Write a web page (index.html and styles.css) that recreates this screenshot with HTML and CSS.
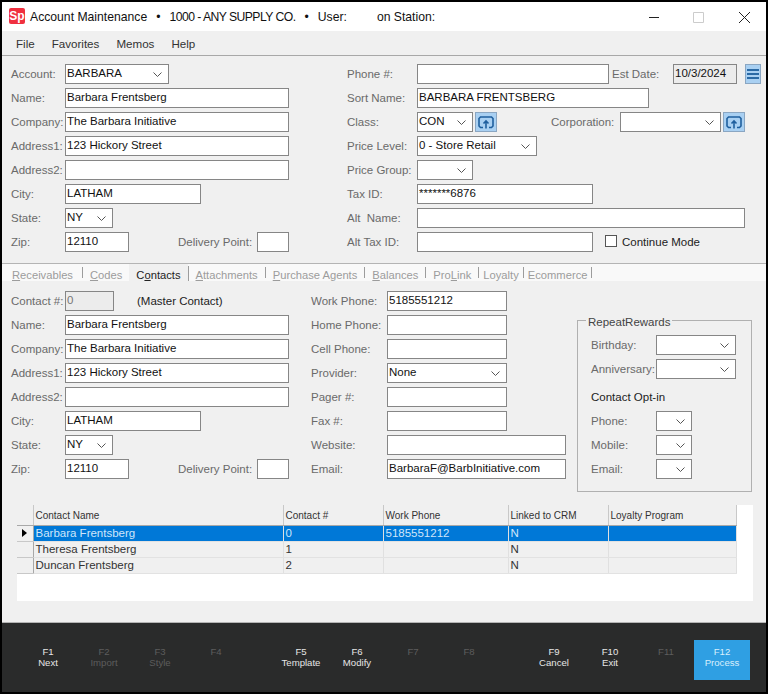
FILE: index.html
```html
<!DOCTYPE html>
<html lang="en">
<head>
  <meta charset="UTF-8">
  <title>Account Maintenance</title>
  <link rel="stylesheet" href="styles.css">
</head>
<body>
  <div class="window">
    <div class="titlebar">
      <div class="logo">Sp</div>
      <div class="title">
        <span>Account Maintenance</span>
        <span>•</span>
        <span class="company">1000 - ANY SUPPLY CO.</span>
        <span>•</span>
        <span>User:</span>
        <span class="station">on Station:</span>
      </div>
      <svg class="win-btn" width="101" height="12" viewBox="0 0 101 12" fill="none">
        <path d="M0 6.5H10" stroke="#222"/>
        <path d="M44.5 1.5H54.5V11.5H44.5Z" stroke="#ccc"/>
        <path d="M90 1L101 12M101 1L90 12" stroke="#222"/>
      </svg>
    </div>

    <div class="menubar">
      <span>File</span>
      <span>Favorites</span>
      <span>Memos</span>
      <span>Help</span>
    </div>

    <div class="account">
      <div class="col-left">
        <div class="row"><label>Account:</label><div class="field select w104">BARBARA<svg class="chev" width="9" height="5" viewBox="0 0 9 5"><path d="M.5 .5L4.5 4.5L8.5 .5" fill="none" stroke="#555"/></svg></div></div>
        <div class="row"><label>Name:</label><div class="field w224">Barbara Frentsberg</div></div>
        <div class="row"><label>Company:</label><div class="field w224">The Barbara Initiative</div></div>
        <div class="row"><label>Address1:</label><div class="field w224">123 Hickory Street</div></div>
        <div class="row"><label>Address2:</label><div class="field w224"></div></div>
        <div class="row"><label>City:</label><div class="field w136">LATHAM</div></div>
        <div class="row"><label>State:</label><div class="field select w48">NY<svg class="chev" width="9" height="5" viewBox="0 0 9 5"><path d="M.5 .5L4.5 4.5L8.5 .5" fill="none" stroke="#555"/></svg></div></div>
        <div class="row"><label>Zip:</label><div class="field w64">12110</div><label class="delivery">Delivery Point:</label><div class="field w32"></div></div>
      </div>
      <div class="col-right">
        <div class="row"><label>Phone #:</label><div class="field w192"></div><label class="est">Est Date:</label><div class="field disabled w64">10/3/2024</div>
          <div class="tool-btn menu-btn"><svg width="12" height="12" viewBox="0 0 12 12"><path d="M0 2H12M0 6H12M0 10H12" stroke="#2a6aa6" stroke-width="2"/></svg></div></div>
        <div class="row"><label>Sort Name:</label><div class="field w232">BARBARA FRENTSBERG</div></div>
        <div class="row"><label>Class:</label><div class="field select w56">CON<svg class="chev" width="9" height="5" viewBox="0 0 9 5"><path d="M.5 .5L4.5 4.5L8.5 .5" fill="none" stroke="#555"/></svg></div>
          <div class="tool-btn"><svg width="16" height="13" viewBox="0 0 16 13" fill="none"><path d="M5 11.5H2.5L1 10V2.5L2.5 1H13.5L15 2.5V10L13.5 11.5H11M8 12.5V5M5.5 7.5L8 5L10.5 7.5" stroke="#1f5f9e" stroke-width="1.6"/></svg></div>
          <label class="corp">Corporation:</label><div class="field select w101"><svg class="chev" width="9" height="5" viewBox="0 0 9 5"><path d="M.5 .5L4.5 4.5L8.5 .5" fill="none" stroke="#555"/></svg></div>
          <div class="tool-btn"><svg width="16" height="13" viewBox="0 0 16 13" fill="none"><path d="M5 11.5H2.5L1 10V2.5L2.5 1H13.5L15 2.5V10L13.5 11.5H11M8 12.5V5M5.5 7.5L8 5L10.5 7.5" stroke="#1f5f9e" stroke-width="1.6"/></svg></div></div>
        <div class="row"><label>Price Level:</label><div class="field select w120">0 - Store Retail<svg class="chev" width="9" height="5" viewBox="0 0 9 5"><path d="M.5 .5L4.5 4.5L8.5 .5" fill="none" stroke="#555"/></svg></div></div>
        <div class="row"><label>Price Group:</label><div class="field select w56"><svg class="chev" width="9" height="5" viewBox="0 0 9 5"><path d="M.5 .5L4.5 4.5L8.5 .5" fill="none" stroke="#555"/></svg></div></div>
        <div class="row"><label>Tax ID:</label><div class="field w176">*******6876</div></div>
        <div class="row"><label>Alt &nbsp;Name:</label><div class="field w328"></div></div>
        <div class="row"><label>Alt Tax ID:</label><div class="field w176"></div><div class="checkbox"></div><span class="check-label">Continue Mode</span></div>
      </div>
    </div>

    <div class="tabs">
      <div class="tab t-first"><u>R</u>eceivables</div><i class="tab-sep"></i>
      <div class="tab"><u>C</u>odes</div>
      <div class="tab active">C<u>o</u>ntacts</div><i class="tab-sep tall"></i>
      <div class="tab"><u>A</u>ttachments</div><i class="tab-sep"></i>
      <div class="tab"><u>P</u>urchase Agents</div><i class="tab-sep"></i>
      <div class="tab"><u>B</u>alances</div><i class="tab-sep"></i>
      <div class="tab">Pro<u>L</u>ink</div><i class="tab-sep"></i>
      <div class="tab t-tight">Loyalty</div><i class="tab-sep"></i>
      <div class="tab t-tight">Ecommerce</div><i class="tab-sep"></i>
    </div>

    <div class="contact">
      <div class="col-contact">
        <div class="row"><label>Contact #:</label><div class="field disabled id-field w49">0</div><span class="master">(Master Contact)</span></div>
        <div class="row"><label>Name:</label><div class="field w224">Barbara Frentsberg</div></div>
        <div class="row"><label>Company:</label><div class="field w224">The Barbara Initiative</div></div>
        <div class="row"><label>Address1:</label><div class="field w224">123 Hickory Street</div></div>
        <div class="row"><label>Address2:</label><div class="field w224"></div></div>
        <div class="row"><label>City:</label><div class="field w136">LATHAM</div></div>
        <div class="row"><label>State:</label><div class="field select w48">NY<svg class="chev" width="9" height="5" viewBox="0 0 9 5"><path d="M.5 .5L4.5 4.5L8.5 .5" fill="none" stroke="#555"/></svg></div></div>
        <div class="row"><label>Zip:</label><div class="field w64">12110</div><label class="delivery">Delivery Point:</label><div class="field w32"></div></div>
      </div>
      <div class="col-phones">
        <div class="row"><label>Work Phone:</label><div class="field w120">5185551212</div></div>
        <div class="row"><label>Home Phone:</label><div class="field w120"></div></div>
        <div class="row"><label>Cell Phone:</label><div class="field w120"></div></div>
        <div class="row"><label>Provider:</label><div class="field select w120">None<svg class="chev" width="9" height="5" viewBox="0 0 9 5"><path d="M.5 .5L4.5 4.5L8.5 .5" fill="none" stroke="#555"/></svg></div></div>
        <div class="row"><label>Pager #:</label><div class="field w120"></div></div>
        <div class="row"><label>Fax #:</label><div class="field w120"></div></div>
        <div class="row"><label>Website:</label><div class="field w179"></div></div>
        <div class="row"><label>Email:</label><div class="field w179">BarbaraF@BarbInitiative.com</div></div>
      </div>
      <fieldset class="rewards">
        <legend>RepeatRewards</legend>
        <div class="row"><label>Birthday:</label><div class="field select w80"><svg class="chev" width="9" height="5" viewBox="0 0 9 5"><path d="M.5 .5L4.5 4.5L8.5 .5" fill="none" stroke="#555"/></svg></div></div>
        <div class="row"><label>Anniversary:</label><div class="field select w80"><svg class="chev" width="9" height="5" viewBox="0 0 9 5"><path d="M.5 .5L4.5 4.5L8.5 .5" fill="none" stroke="#555"/></svg></div></div>
        <div class="optin">Contact Opt-in</div>
        <div class="row"><label>Phone:</label><div class="field select w36"><svg class="chev" width="9" height="5" viewBox="0 0 9 5"><path d="M.5 .5L4.5 4.5L8.5 .5" fill="none" stroke="#555"/></svg></div></div>
        <div class="row"><label>Mobile:</label><div class="field select w36"><svg class="chev" width="9" height="5" viewBox="0 0 9 5"><path d="M.5 .5L4.5 4.5L8.5 .5" fill="none" stroke="#555"/></svg></div></div>
        <div class="row"><label>Email:</label><div class="field select w36"><svg class="chev" width="9" height="5" viewBox="0 0 9 5"><path d="M.5 .5L4.5 4.5L8.5 .5" fill="none" stroke="#555"/></svg></div></div>
      </fieldset>
    </div>

    <div class="grid-wrap">
      <table class="grid">
        <colgroup>
          <col class="c-head"><col class="c-name"><col class="c-num"><col class="c-phone"><col class="c-crm"><col class="c-loyal">
        </colgroup>
        <thead>
          <tr><th></th><th>Contact Name</th><th>Contact #</th><th>Work Phone</th><th>Linked to CRM</th><th>Loyalty Program</th></tr>
        </thead>
        <tbody>
          <tr class="selected"><td class="row-head"><svg width="5" height="8" viewBox="0 0 5 8"><path d="M0 0L5 4L0 8Z" fill="#000"/></svg></td><td>Barbara Frentsberg</td><td>0</td><td>5185551212</td><td>N</td><td></td></tr>
          <tr><td class="row-head"></td><td>Theresa Frentsberg</td><td>1</td><td></td><td>N</td><td></td></tr>
          <tr><td class="row-head"></td><td>Duncan Frentsberg</td><td>2</td><td></td><td>N</td><td></td></tr>
        </tbody>
      </table>
    </div>

    <div class="footer">
      <div class="fkey">F1<br>Next</div>
      <div class="fkey off">F2<br>Import</div>
      <div class="fkey off">F3<br>Style</div>
      <div class="fkey off group-end">F4<br>&nbsp;</div>
      <div class="fkey">F5<br>Template</div>
      <div class="fkey">F6<br>Modify</div>
      <div class="fkey off">F7<br>&nbsp;</div>
      <div class="fkey off group-end">F8<br>&nbsp;</div>
      <div class="fkey">F9<br>Cancel</div>
      <div class="fkey">F10<br>Exit</div>
      <div class="fkey off">F11<br>&nbsp;</div>
      <div class="fkey primary">F12<br>Process</div>
    </div>
  </div>
</body>
</html>
```

FILE: styles.css
```css
* {
  box-sizing: border-box;
}
html, body {
  margin: 0;
  padding: 0;
}
body {
  width: 768px;
  height: 694px;
  overflow: hidden;
  font-family: "Liberation Sans", Arial, sans-serif;
  font-size: 11.5px;
  color: #111;
}
.window {
  display: flex;
  flex-direction: column;
  width: 768px;
  height: 694px;
  border: 2px solid #000;
  background: #f0f0f0;
}

/* title + menu */
.titlebar {
  display: flex;
  align-items: center;
  height: 29px;
  padding-left: 7px;
  background: #fff;
  font-size: 12.2px;
}
.logo {
  width: 16px;
  height: 16px;
  margin: 0 5px 2px 0;
  border-radius: 2px;
  background: #f0303f;
  color: #fff;
  font-size: 12px;
  font-weight: bold;
  line-height: 16px;
  text-align: center;
}
.title {
  display: flex;
  gap: 9px;
  white-space: nowrap;
}
.company {
  letter-spacing: -0.55px;
}
.station {
  margin-left: 21px;
}
.win-btn {
  margin-left: auto;
  margin-right: 16px;
}
.menubar {
  display: flex;
  gap: 17px;
  height: 25px;
  padding: 6px 0 0 14px;
  border-bottom: 1px solid #a8a8a8;
  color: #333;
  font-size: 11.6px;
}

/* form rows */
.row {
  display: flex;
  align-items: center;
  height: 20px;
  margin-bottom: 4px;
}
.row label {
  flex: none;
  color: #6a6a6a;
}
.field {
  position: relative;
  flex: none;
  height: 20px;
  padding: 0 1px;
  border: 1px solid #868686;
  background: #fff;
  color: #111;
  line-height: 16px;
  white-space: nowrap;
}
.field.disabled {
  background: #ececec;
}
.id-field {
  color: #777;
}
.chev {
  position: absolute;
  top: 7px;
  right: 6px;
}
.w32 { width: 32px; }
.w36 { width: 36px; }
.w48 { width: 48px; }
.w49 { width: 49px; }
.w56 { width: 56px; }
.w64 { width: 64px; }
.w80 { width: 80px; }
.w101 { width: 101px; }
.w104 { width: 104px; }
.w120 { width: 120px; }
.w136 { width: 136px; }
.w176 { width: 176px; }
.w179 { width: 179px; }
.w192 { width: 192px; }
.w224 { width: 224px; }
.w232 { width: 232px; }
.w328 { width: 328px; }

/* account block */
.account {
  display: flex;
  height: 207px;
  padding: 8px 0 0 8px;
}
.col-left {
  width: 337px;
}
.col-left label,
.col-contact label {
  width: 55px;
  padding-left: 1px;
}
.col-right label {
  width: 70px;
}
.col-right label.est {
  width: 61px;
  margin-left: 3px;
}
.col-right label.corp {
  width: 69px;
  margin-left: 54px;
}
.col-left label.delivery,
.col-contact label.delivery {
  width: 79px;
  margin-left: 49px;
  padding-left: 0;
}
.tool-btn {
  display: flex;
  flex: none;
  align-items: center;
  justify-content: center;
  width: 22px;
  height: 20px;
  margin-left: 2px;
  border: 1px solid #8aa6c2;
  background: #a9d0f2;
}
.menu-btn {
  width: 16px;
  margin-left: 8px;
}
.checkbox {
  width: 12px;
  height: 12px;
  margin: 0 0 2px 12px;
  border: 1px solid #555;
  background: #fff;
}
.check-label {
  margin-left: 5px;
  color: #222;
}

/* tabs */
.tabs {
  display: flex;
  align-items: stretch;
  height: 18px;
  border-top: 1px solid #b4b4b4;
  background: #f9f9f9;
  color: #9c9c9c;
  font-size: 11.2px;
  line-height: 22px;
}
.tab {
  padding: 0 7px;
}
.t-first {
  padding-left: 10px;
  padding-right: 9px;
}
.t-tight {
  padding: 0 4px;
}
.tab.active {
  background: #f0f0f0;
  color: #222;
}
.tab-sep {
  flex: none;
  align-self: center;
  width: 1px;
  height: 11px;
  background: #9c9c9c;
}
.tab-sep.tall {
  align-self: flex-end;
  height: 15px;
}

/* contact block */
.contact {
  display: flex;
  height: 224px;
  padding: 10px 0 0 8px;
}
.col-contact {
  width: 301px;
}
.master {
  margin-left: 23px;
  color: #222;
}
.col-phones {
  width: 255px;
}
.col-phones label {
  width: 76px;
}
.rewards {
  width: 175px;
  height: 180px;
  min-width: 0;
  margin: 21px 0 0 11px;
  padding: 7px 0 0 13px;
  border: 1px solid #b0b0b0;
}
.rewards legend {
  margin-left: -5px;
  padding: 4px 2px 0;
  color: #444;
}
.rewards label {
  width: 65px;
}
.optin {
  height: 28px;
  padding-top: 8px;
  color: #222;
}

/* contacts grid */
.grid-wrap {
  width: 736px;
  height: 96px;
  margin: 0 0 0 15px;
  background: #fff;
}
.grid {
  width: 719px;
  border-collapse: collapse;
  table-layout: fixed;
}
.c-head { width: 16px; }
.c-name { width: 250px; }
.c-num { width: 100px; }
.c-phone { width: 125px; }
.c-crm { width: 100px; }
.c-loyal { width: 128px; }
.grid th {
  height: 20px;
  padding: 1px 2px 0;
  border-right: 1px solid #c8c8c8;
  border-bottom: 1px solid #a8a8a8;
  background: #f0f0f0;
  color: #333;
  font-size: 10px;
  font-weight: normal;
  text-align: left;
}
.grid td {
  height: 16px;
  padding: 0 2px;
  border-right: 1px solid #e0e0e0;
  border-bottom: 1px solid #e2e2e2;
  background: #f0f0f0;
  color: #333;
  font-size: 11.5px;
  line-height: 14px;
}
.grid td.row-head {
  padding: 0 0 0 5px;
  border-right: 1px solid #a8a8a8;
  border-bottom: 1px solid #c8c8c8;
}
.grid .selected td {
  background: #0078d7;
  color: #cfe6fa;
}
.grid .selected td.row-head {
  background: #f0f0f0;
}

/* function keys */
.footer {
  display: flex;
  align-items: center;
  height: 70px;
  margin-top: auto;
  padding: 4px 0 0 18px;
  border-top: 1px solid #b4b4b4;
  background: #2a2b2b;
}
.fkey {
  flex: none;
  width: 56px;
  height: 40px;
  padding-top: 6px;
  color: #e6e6e6;
  font-size: 9.6px;
  line-height: 11px;
  text-align: center;
}
.fkey.off {
  color: #5d5d5d;
}
.fkey.group-end {
  margin-right: 29px;
}
.fkey.primary {
  background: #2f9fe3;
  color: #d8eefc;
}
```
